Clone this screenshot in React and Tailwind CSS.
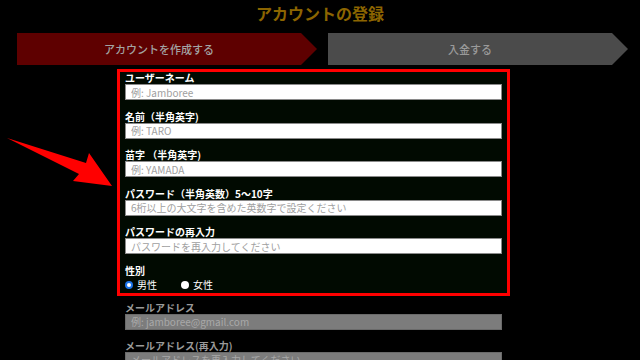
import { useState } from 'react';

const font = { fontFamily: '"Noto Sans CJK JP", "Noto Sans", sans-serif' };

function Field({ label, placeholder, dim }) {
  return (
    <div className="flex flex-col">
      <label className={`h-[12px] text-[10px] leading-[12px] font-bold ${dim ? 'text-[#9a9a9a]' : 'text-white'}`}>
        {label}
      </label>
      <input
        placeholder={placeholder}
        className={`h-[16px] w-full px-[5px] text-[10px] leading-[14px] outline-none ${
          dim
            ? 'bg-[#7c7c7c] border border-[#6a6a6a] placeholder:text-[#a9a9a9]'
            : 'bg-white border border-[#8a8a8a] placeholder:text-[#a0a0a0]'
        }`}
        style={font}
      />
    </div>
  );
}

export default function App() {
  const [gender, setGender] = useState('male');

  return (
    <div className="relative w-[640px] h-[360px] overflow-hidden bg-black" style={font}>
      <h1 className="h-[33px] pt-[1px] text-center text-[16px] leading-[24px] font-bold text-[#8c6500]">
        アカウントの登録
      </h1>

      <div className="flex gap-[11px] pl-[17px]">
        <div className="flex h-[32px] w-[300px] items-center justify-center bg-[#5e0000] pr-[16px] text-[11px] font-medium text-[#a3a3a3] [clip-path:polygon(0_0,calc(100%-16px)_0,100%_50%,calc(100%-16px)_100%,0_100%)]">
          アカウントを作成する
        </div>
        <div className="flex h-[32px] w-[300px] items-center justify-center bg-[#4b4b4b] pr-[16px] text-[11px] font-medium text-[#9a9a9a] [clip-path:polygon(0_0,calc(100%-16px)_0,100%_50%,calc(100%-16px)_100%,0_100%)]">
          入金する
        </div>
      </div>

      <div className="ml-[117px] mt-[4px] w-[393px]">
        <div className="flex flex-col gap-[10.5px] border-[3px] border-[#ff0000] bg-[#010a01] pl-[5px] pr-[5px] pb-[2px]">
          <Field label="ユーザーネーム" placeholder="例: Jamboree" />
          <Field label="名前（半角英字)" placeholder="例: TARO" />
          <Field label="苗字 （半角英字)" placeholder="例: YAMADA" />
          <Field label="パスワード（半角英数）5〜10字" placeholder="6桁以上の大文字を含めた英数字で設定ください" />
          <Field label="パスワードの再入力" placeholder="パスワードを再入力してください" />
          <div className="flex flex-col">
            <span className="h-[12px] text-[10px] leading-[12px] font-bold text-white">性別</span>
            <div className="mt-[2px] flex h-[12px] items-center text-[10px] leading-[12px] text-white">
              <button onClick={() => setGender('male')} className="flex items-center gap-[4px] w-[56px]">
                <span className={`h-[8px] w-[8px] rounded-full ${gender === 'male' ? 'border-[2px] border-[#1a73e8] bg-white' : 'bg-white'}`} />
                男性
              </button>
              <button onClick={() => setGender('female')} className="flex items-center gap-[4px]">
                <span className={`h-[8px] w-[8px] rounded-full ${gender === 'female' ? 'border-[2px] border-[#1a73e8] bg-white' : 'bg-white'}`} />
                女性
              </button>
            </div>
          </div>
        </div>

        <div className="mt-[6px] flex flex-col gap-[10px] px-[8px]">
          <Field dim label="メールアドレス" placeholder="例: jamboree@gmail.com" />
          <Field dim label="メールアドレス(再入力)" placeholder="メールアドレスを再入力してください" />
        </div>
      </div>

      <svg className="absolute left-0 top-0" width="130" height="200" viewBox="0 0 130 200">
        <polygon points="7,138 86,163 89,153 112,186 73,181 79,174" fill="#ff0000" />
      </svg>
    </div>
  );
}
